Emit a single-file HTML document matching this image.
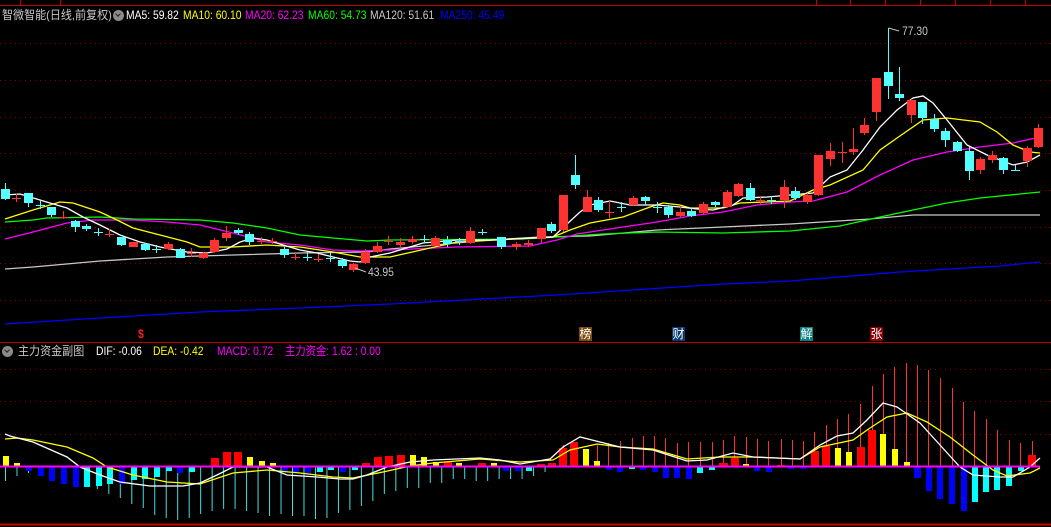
<!DOCTYPE html>
<html><head><meta charset="utf-8">
<style>
html,body{margin:0;padding:0;background:#000;overflow:hidden}
body{width:1051px;height:527px;position:relative;font-family:"Liberation Sans","Noto Sans CJK SC",sans-serif}
svg{position:absolute;left:0;top:0}
.t{position:absolute;font-size:12px;white-space:nowrap;line-height:14px;transform:scaleX(0.86);transform-origin:0 0}
.ic{position:absolute;width:11px;height:11px;border-radius:50%;background:#8a8a8a}
.ic:after{content:"";position:absolute;left:3px;top:2px;width:3px;height:3px;border-right:1.5px solid #222;border-bottom:1.5px solid #222;transform:rotate(45deg)}
.mk{position:absolute;top:327px;width:13px;height:14px;font-size:12px;line-height:14px;text-align:center;color:#fff}
</style></head><body>
<svg id="s" width="1051" height="527" xmlns="http://www.w3.org/2000/svg"></svg>
<div class="t" style="left:2px;top:8px;color:#c8c8c8;transform:scaleX(0.92)">智微智能(日线,前复权)</div>
<div class="ic" style="left:113px;top:10px"></div>
<div class="t" style="left:126px;top:8px;color:#fff">MA5: 59.82</div>
<div class="t" style="left:183px;top:8px;color:#ffff00">MA10: 60.10</div>
<div class="t" style="left:245px;top:8px;color:#ff00ff">MA20: 62.23</div>
<div class="t" style="left:308px;top:8px;color:#00ff00">MA60: 54.73</div>
<div class="t" style="left:370px;top:8px;color:#c8c8c8">MA120: 51.61</div>
<div class="t" style="left:440px;top:8px;color:#0000ff">MA250: 45.49</div>
<div class="t" style="left:902px;top:24px;color:#c8c8c8">77.30</div>
<div class="t" style="left:368px;top:265px;color:#c8c8c8">43.95</div>
<div class="ic" style="left:2px;top:346px"></div>
<div class="t" style="left:18px;top:344px;color:#c8c8c8;transform:scaleX(0.92)">主力资金副图</div>
<div class="t" style="left:96px;top:344px;color:#fff">DIF: -0.06</div>
<div class="t" style="left:153px;top:344px;color:#ffff00">DEA: -0.42</div>
<div class="t" style="left:217px;top:344px;color:#ff00ff">MACD: 0.72</div>
<div class="t" style="left:285px;top:344px;color:#ff00ff">主力资金: 1.62 : 0.00</div>
<div class="t" style="left:138px;top:327px;color:#ff2020;font-weight:bold">$</div>
<div class="mk" style="left:579px;background:#7a4a10">榜</div>
<div class="mk" style="left:672px;background:#0a3a70">财</div>
<div class="mk" style="left:800px;background:#0a8080">解</div>
<div class="mk" style="left:870px;background:#8a0000">张</div>
<script>
var s=document.getElementById('s'),h='';
function L(x1,y1,x2,y2,c,w,d){h+='<line x1="'+x1+'" y1="'+y1+'" x2="'+x2+'" y2="'+y2+'" stroke="'+c+'" stroke-width="'+(w||1)+'"'+(d?' stroke-dasharray="'+d+'"':'')+'/>';}
function R(x,y,w,hh,c){h+='<rect x="'+x+'" y="'+y+'" width="'+w+'" height="'+Math.max(hh,1)+'" fill="'+c+'"/>';}
function P(a,c){var p=[];for(var i=0;i<a.length;i+=2)p.push(a[i]+','+a[i+1]);h+='<polyline points="'+p.join(' ')+'" fill="none" stroke="'+c+'" stroke-width="1.3"/>';}
L(0,5.5,1051,5.5,'#c00000');[20,60,816,850,885,920,955,990,1025].forEach(function(x){L(x+.5,0,x+.5,5,'#c00000')});
[43,80,117,153,190,227,263,300].forEach(function(y){L(0,y+.5,1051,y+.5,'#8a0000',1,'1 4')});
[369,401,434].forEach(function(y){L(0,y+.5,1051,y+.5,'#8a0000',1,'1 4')});
L(0,342.5,1051,342.5,'#c00000');L(0,524.5,1051,524.5,'#d00000',2);
// MA lines
P([5,324,100,318,200,312,300,308,390,304,557,295,723,284,790,281,900,272,1000,266,1040,262],'#0000ff');
P([5,269,33,267,100,261,167,257,233,255,300,253,367,252,390,249,490,240,540,237,590,236,657,230,723,227,790,224,870,219,913,215,1040,215],'#c8c8c8');
P([5,222,33,220,47,218,100,217,133,219,200,220,233,223,267,228,300,235,333,238,367,241,390,240,523,239,557,237,603,234,657,232,723,233,790,231,840,226,880,217,913,210,947,203,980,198,1040,192],'#00ff00');
P([5,239,33,232,67,223,93,220,133,220,167,222,200,225,233,233,267,242,300,245,333,250,360,251,390,250,457,247,530,246,557,240,577,234,623,227,657,222,690,216,723,212,757,205,790,202,813,201,847,192,880,175,913,160,947,152,980,147,1013,143,1040,137],'#ff00ff');
P([5,219,33,210,60,202,73,203,100,212,117,220,133,228,160,235,187,242,200,247,233,247,267,245,300,247,333,252,360,257,390,257,457,242,553,237,570,230,590,223,623,217,650,207,663,203,680,205,690,208,723,208,740,203,790,201,813,190,830,185,863,170,880,150,897,138,923,120,947,118,980,122,997,132,1013,145,1030,152,1040,153],'#ffff00');
P([5,195,20,194,50,203,67,208,83,217,100,225,120,235,140,242,160,247,187,252,207,253,227,249,240,242,253,238,267,240,283,245,300,250,317,253,333,257,350,261,360,262,370,257,390,253,423,243,457,240,490,240,553,237,580,212,590,205,610,201,630,205,657,205,680,207,697,209,713,210,733,205,743,198,767,197,790,195,813,193,830,177,847,170,863,150,880,127,897,110,913,98,923,96,933,103,947,120,967,145,987,155,1013,165,1027,162,1040,155],'#ffffff');
var C='#54ffff',Rd='#ff3232';
var cd=[[5,189,199,183,200,C],[16,198,198,194,202,Rd],[28,193,203,193,207,C],[40,205,205,200,209,C],[51,207,215,207,217,C],[63,217,217,211,219,Rd],[75,221,227,220,232,C],[86,226,229,224,231,C],[98,232,232,228,236,C],[109,234,234,229,237,Rd],[121,237,245,237,246,C],[133,242,247,242,247,Rd],[145,244,250,243,251,C],[156,249,249,245,253,C],[168,244,249,242,250,Rd],[180,249,258,248,258,C],[191,253,253,248,257,Rd],[203,253,258,252,259,Rd],[214,240,252,238,253,Rd],[226,233,238,226,241,Rd],[238,230,233,228,235,C],[249,234,242,232,245,C],[261,241,241,237,244,Rd],[272,241,241,238,244,Rd],[284,249,255,247,258,C],[295,257,257,252,260,Rd],[307,257,257,252,261,C],[318,259,259,254,262,Rd],[330,258,258,253,262,C],[342,260,266,258,268,C],[353,264,270,263,272,Rd],[365,252,263,249,264,Rd],[377,246,252,242,253,Rd],[388,241,241,236,245,Rd],[400,242,245,238,247,Rd],[412,239,242,236,244,Rd],[424,239,239,235,243,C],[435,238,246,236,246,Rd],[447,240,244,236,247,C],[459,241,241,238,245,C],[470,231,243,227,244,Rd],[482,232,232,229,235,C],[501,237,247,237,249,C],[516,244,247,242,250,Rd],[528,243,245,240,247,Rd],[541,228,239,228,243,Rd],[551,224,231,222,233,C],[563,195,230,195,232,Rd],[575,175,185,155,189,C],[587,197,212,190,212,Rd],[598,200,210,197,212,C],[609,212,212,201,218,Rd],[621,207,207,202,212,C],[633,198,205,196,206,Rd],[645,197,201,196,205,C],[657,207,207,202,213,C],[668,207,215,205,218,C],[680,212,216,206,217,Rd],[691,211,216,208,217,C],[703,204,213,202,214,Rd],[715,202,205,201,207,C],[727,192,207,190,208,Rd],[738,184,196,183,197,Rd],[750,188,200,183,201,C],[760,200,200,196,204,Rd],[771,200,200,196,204,C],[784,187,200,180,208,Rd],[795,191,198,187,200,C],[807,195,202,193,204,Rd],[818,155,195,155,196,Rd],[830,151,159,143,166,Rd],[842,152,152,142,163,Rd],[853,149,152,128,155,Rd],[864,125,133,118,135,Rd],[876,78,112,78,121,Rd],[888,72,86,28,99,C],[899,94,98,67,101,C],[911,100,115,99,123,Rd],[922,102,118,102,124,C],[934,119,129,114,132,C],[945,131,140,128,147,C],[957,142,151,141,152,C],[969,151,171,147,180,C],[980,159,170,157,174,Rd],[992,155,160,151,163,Rd],[1003,158,170,157,174,C],[1015,170,170,165,171,C],[1027,148,161,146,167,Rd],[1038,128,147,124,148,Rd]];
cd.forEach(function(c){L(c[0]+.5,c[3],c[0]+.5,c[4],c[5]);if(c[2]-c[1]<1)L(c[0]-4,c[1]+.5,c[0]+5,c[1]+.5,c[5]);else R(c[0]-4,c[1],9,c[2]-c[1],c[5]);});
L(888.5,28,899,31,'#c8c8c8');L(355,268,366,272,'#c8c8c8');
var dn=[15,10,7,8,7,12,7,20,23,28,32,38,42,49,52,54,52,48,45,43,43,45,47,50,48,50,50,53,52,47,44,40,35,28,25,22,22,17,17,13,13,15,15,13,13,13,10,6];
dn.forEach(function(v,i){var x=5.5+i*11.48;L(x,466,x,466+v,'#40e0e0')});
var up=[[563,445],[597,445],[608,443],[620,441],[632,438],[643,436],[654,436],[665,438],[677,443],[688,442],[700,442],[712,442],[723,440],[734,436],[746,437],[757,439],[768,441],[781,439],[792,440],[803,441],[814,432],[826,425],[837,419],[848,414],[860,404],[872,386],[883,374],[894,367],[906,363],[917,365],[928,370],[940,378],[952,388],[963,402],[974,411],[986,419],[997,430],[1009,440],[1020,443],[1032,441]];
up.forEach(function(u){L(u[0]+.5,u[1],u[0]+.5,466,'#ff3030')});
var Y='#ffff00',B='#0000ff',Cy='#00ffff',RR='#ff0000';
var bars=[[3,8,456,Y],[14,19,463,Y],[26,31,471,B],[38,43,476,B],[49,54,481,B],[61,66,484,B],[73,78,487,B],[84,89,487,Cy],[96,101,486,Cy],[107,112,484,Cy],[119,124,484,B],[131,136,480,Cy],[142,147,479,Cy],[154,159,477,Cy],[166,171,471,Cy],[177,182,473,B],[189,194,472,Cy],[211,218,458,RR],[223,230,452,RR],[234,241,452,RR],[247,252,457,Y],[259,264,461,Y],[270,275,463,Y],[282,287,471,B],[293,298,473,B],[305,310,473,B],[317,322,472,Cy],[328,333,470,Cy],[340,345,472,B],[352,357,470,Cy],[362,369,463,RR],[374,381,457,RR],[385,392,456,RR],[397,404,455,RR],[410,415,455,Y],[421,426,457,Y],[433,438,462,Y],[444,451,462,RR],[456,461,463,Y],[478,485,463,RR],[491,496,463,Y],[503,508,471,B],[515,520,471,B],[526,531,471,Cy],[537,544,464,RR],[548,555,463,RR],[559,566,448,RR],[570,577,442,RR],[583,588,449,Y],[594,599,461,Y],[606,611,470,B],[617,622,472,B],[629,634,469,Cy],[640,645,470,B],[652,657,472,B],[663,668,478,B],[674,679,478,B],[686,691,479,B],[697,702,473,Cy],[709,714,470,Cy],[719,727,463,RR],[731,738,458,RR],[743,748,464,Y],[754,759,471,B],[766,771,472,B],[777,784,465,RR],[788,793,469,B],[800,805,469,B],[811,818,451,RR],[822,829,446,RR],[835,840,448,Y],[846,851,452,Y],[857,864,447,RR],[868,875,430,RR],[880,885,434,Y],[892,897,449,Y],[904,909,462,Y],[914,920,478,B],[926,931,491,B],[937,942,499,B],[949,954,504,B],[961,966,511,B],[972,977,502,Cy],[983,988,492,Cy],[994,999,490,Cy],[1006,1011,486,Cy],[1018,1023,471,Cy],[1028,1035,455,RR]];
bars.forEach(function(b){var y=b[2];if(y<466)R(b[0],y,b[1]-b[0]+1,466-y,b[3]);else R(b[0],467,b[1]-b[0]+1,y-467,b[3]);});
P([5,439,17,438,33,440,67,447,93,458,107,467,133,475,167,482,200,484,233,473,267,470,300,473,333,477,353,478,383,472,410,466,433,463,480,459,520,462,553,460,570,450,597,444,620,447,653,449,687,459,720,457,753,457,800,459,820,447,853,440,870,428,887,417,907,413,927,422,950,437,973,455,993,470,1007,476,1030,473,1040,468],'#ffff00');
P([5,434,10,436,33,442,67,457,80,467,100,475,120,482,150,486,183,486,200,483,217,475,233,467,267,467,287,475,317,477,340,479,353,479,367,475,387,467,410,462,433,460,480,458,500,460,520,464,550,459,563,447,580,437,600,442,620,447,653,450,687,461,707,460,733,453,753,457,800,459,820,445,837,436,853,433,867,420,883,403,897,407,920,423,940,445,960,467,973,475,1000,477,1013,477,1030,467,1040,458],'#ffffff');
L(0,466.5,1040,466.5,'#ff00ff',2);
s.innerHTML=h;
</script>
</body></html>
